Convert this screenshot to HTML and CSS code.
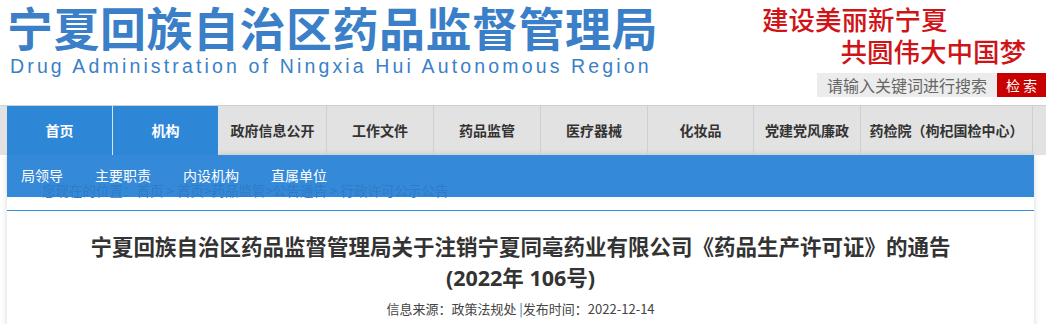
FILE: index.html
```html
<!DOCTYPE html>
<html lang="zh-CN">
<head>
  <meta charset="UTF-8">
  <title>宁夏回族自治区药品监督管理局</title>
  <link rel="stylesheet" href="styles.css">
</head>
<body>
  <!-- 顶部：站名 + 标语 + 搜索 -->
  <div class="header">
    <div class="brand">
      <div class="brand-cn">宁夏回族自治区药品监督管理局</div>
      <div class="brand-en">Drug Administration of Ningxia Hui Autonomous Region</div>
    </div>
    <div class="aside">
      <div class="slogan">
        <div class="slogan-1">建设美丽新宁夏</div>
        <div class="slogan-2">共圆伟大中国梦</div>
      </div>
      <div class="search">
        <div class="search-input">请输入关键词进行搜索</div>
        <div class="search-btn">检 索</div>
      </div>
    </div>
  </div>

  <!-- 主导航 -->
  <div class="nav">
    <ul class="nav-list">
      <li class="active w106">首页</li>
      <li class="active w106">机构</li>
      <li class="w108">政府信息公开</li>
      <li class="w107">工作文件</li>
      <li class="w107">药品监管</li>
      <li class="w107">医疗器械</li>
      <li class="w106">化妆品</li>
      <li class="w107">党建党风廉政</li>
      <li class="w172">药检院（枸杞国检中心）</li>
    </ul>
  </div>

  <div class="page">
    <!-- 二级菜单，下面透出面包屑 -->
    <div class="subnav">
      <div class="subnav-links">
        <span>局领导</span>
        <span>主要职责</span>
        <span>内设机构</span>
        <span>直属单位</span>
      </div>
      <div class="crumb">您现在的位置：首页 &gt; 首页&gt;药品监管&gt;公告通告 &gt; 行政许可公示公告</div>
    </div>

    <div class="content">
      <div class="line"></div>
      <h1 class="article-title">宁夏回族自治区药品监督管理局关于注销宁夏同亳药业有限公司《药品生产许可证》的通告<br>(2022年 106号)</h1>
      <div class="meta">信息来源：政策法规处 <span class="bar">|</span>发布时间：2022-12-14</div>
    </div>
  </div>
</body>
</html>
```

FILE: styles.css
```css
/* 基础 */
body {
  margin: 0;
  background: #fff;
  font-family: "Noto Sans CJK SC", sans-serif;
  color: #333;
}

/* 顶部 */
.header {
  display: flex;
  justify-content: space-between;
  height: 105px;
}
.brand {
  padding: 0 0 0 7px;
}
.brand-cn {
  font-size: 46px;
  line-height: 52px;
  font-weight: 700;
  color: #3a7fc7;
  letter-spacing: 0.5px;
}
.brand-en {
  font-family: "Liberation Sans", Arial, sans-serif;
  font-size: 19.5px;
  line-height: 22px;
  margin-top: 3px;
  padding-left: 3px;
  letter-spacing: 3.15px;
  color: #3a7fc7;
}
.aside {
  display: flex;
  flex-direction: column;
  align-items: flex-end;
}
.slogan {
  width: 284px;
  color: #cf1418;
  font-size: 26.5px;
  font-weight: 500;
  line-height: 32px;
  padding-top: 3px;
}
.slogan-2 {
  text-align: right;
  padding-right: 20px;
}
.search {
  display: flex;
  margin-top: 6px;
  height: 24px;
}
.search-input {
  width: 180px;
  background: #ececec;
  color: #666;
  font-size: 16px;
  line-height: 24px;
  text-align: center;
}
.search-btn {
  width: 49px;
  background: #c80000;
  color: #fff;
  font-size: 14px;
  line-height: 24px;
  text-align: center;
}

/* 主导航 */
.nav {
  background: #e2e2e2;
  border-top: 1px solid #cfcfcf;
  height: 49px;
  padding-left: 7px;
}
.nav-list {
  display: flex;
  margin: 0;
  padding: 0;
  list-style: none;
}
.nav-list li {
  height: 49px;
  line-height: 49px;
  text-align: center;
  font-size: 14px;
  font-weight: 700;
  color: #333;
  border-right: 1px solid #cfcfcf;
  box-sizing: border-box;
}
.nav-list li.active {
  background: #2e86d7;
  color: #fff;
  border-right-color: #d8e6f3;
}
.w106 { width: 106px; }
.w107 { width: 107px; }
.w108 { width: 108px; }
.w172 { width: 172px; }

/* 页面主体 */
.page {
  margin: 0 12px 0 7px;
  box-shadow: 0 0 6px rgba(0, 0, 0, 0.16);
}
.subnav {
  background: #3589d9;
  height: 42px;
}
.subnav-links {
  display: flex;
  gap: 32px;
  padding: 13px 0 0 14px;
  font-size: 14px;
  line-height: 14px;
  color: #fff;
}
.crumb {
  padding: 1px 0 0 35px;
  font-size: 13.5px;
  line-height: 14px;
  color: #2f7bc6;
}
.content {
  padding-top: 13px;
  height: 140px;
}
.line {
  height: 1px;
  background: #2e8fe2;
}
.article-title {
  margin: 20px 0 0;
  text-align: center;
  font-family: "Open Sans", "Noto Sans CJK SC", sans-serif;
  font-size: 21.5px;
  line-height: 31px;
  font-weight: 700;
  color: #333;
}
.meta {
  margin-top: 7px;
  text-align: center;
  font-size: 13px;
  line-height: 18px;
  color: #444;
}
.meta .bar {
  color: #3a6fa8;
}
```
